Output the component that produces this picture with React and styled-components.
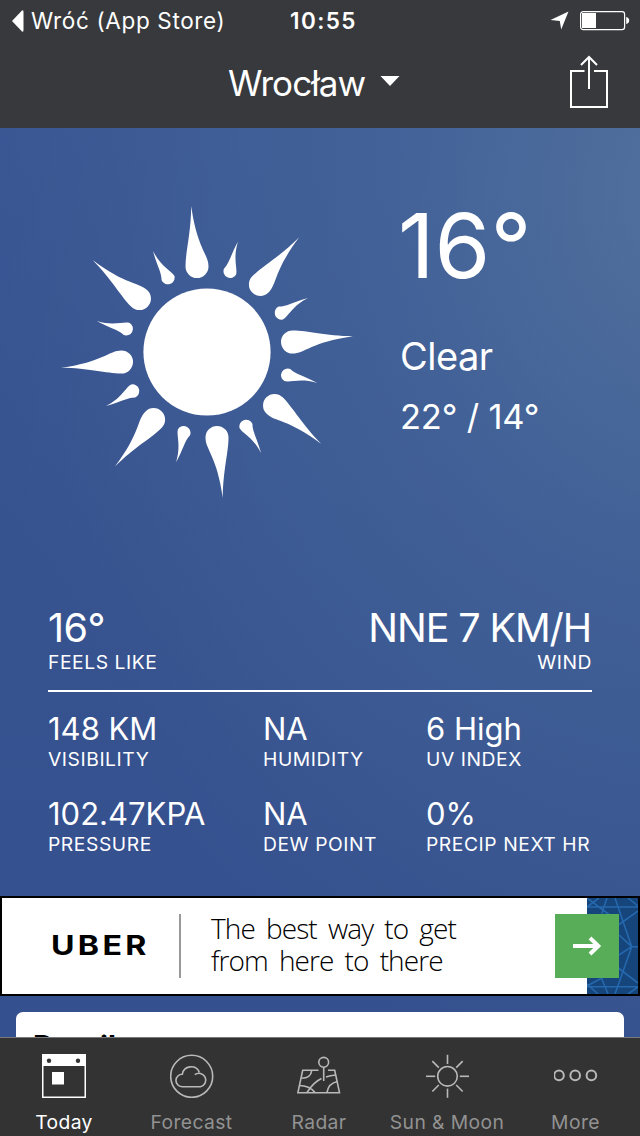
import styled, { createGlobalStyle } from "styled-components";

const stats = [
  { value: "148 KM", label: "VISIBILITY" },
  { value: "NA", label: "HUMIDITY" },
  { value: "6 High", label: "UV INDEX" },
  { value: "102.47KPA", label: "PRESSURE" },
  { value: "NA", label: "DEW POINT" },
  { value: "0%", label: "PRECIP NEXT HR" },
];

const angles = [0, 45, 90, 135, 180, 225, 270, 315];

function SunDrawing() {
  return (
    <svg width="300" height="300" viewBox="-150 -150 300 300" fill="#fff">
      <circle r="63.6" />
      {angles.map((angle, i) => (
        <g key={angle} transform={`rotate(${angle})`}>
          <path d="M-15.8-146C-16-118-21.5-101-21.5-85.5A11.5 11.5 0 0 0 1.5-85.5C1.5-98-10-104-15.8-146Z" />
          {/* every other small ray leans a little */}
          <path
            transform={i % 2 ? "rotate(-1.2)" : undefined}
            d="M-54-101C-50-86-45.4-80-45.4-71.8A6.8 6.8 0 0 0-32.5-75.9C-36-82-46-85-54-101Z"
          />
        </g>
      ))}
    </svg>
  );
}

function ShareIcon() {
  return (
    <svg width="40" height="54" viewBox="0 0 40 54" fill="none" stroke="#fff" strokeWidth="2">
      <path d="M15.5 16H2v36h36V16H25M20 34V2M12 10l8-8 8 8" />
    </svg>
  );
}

function TodayIcon() {
  return (
    <svg width="44" height="44" viewBox="0 0 44 44">
      <path d="M.75.75h42.5v42.5H.75z" fill="none" stroke="#fff" strokeWidth="1.5" />
      <path d="M0 0h44v12H0zM10 18h12v12.5H10z" fill="#fff" />
      <circle cx="7" cy="6.8" r="2.2" fill="#333" />
      <circle cx="36" cy="6.8" r="2.2" fill="#333" />
    </svg>
  );
}

function LineIcon({ children }) {
  return (
    <svg width="44" height="44" viewBox="0 0 44 44" fill="none" stroke="#b9b9b9" strokeWidth="1.6">
      {children}
    </svg>
  );
}

function ForecastIcon() {
  return (
    <LineIcon>
      <circle cx="21.7" cy="22.3" r="21" />
      <path d="M12 32.7A6.2 6.2 0 0 1 12.3 20.3A8.9 8.9 0 0 1 29.3 18.3M24.8 20.7A6.8 6.8 0 1 1 30.5 32.7H12" />
    </LineIcon>
  );
}

function RadarIcon() {
  return (
    <LineIcon>
      <path d="M21.5 16.3H5.7L.9 38.7h41.6L37.7 16.3H31" />
      <circle cx="26.7" cy="8.3" r="4.9" />
      <path d="M26.7 13.3V27M14.7 16.5C14.2 21.5 10 24.2 4.5 24.3M2 31.5C9 31.5 14.5 34 18 38.5M10 38.5C14 32 19 27 24.5 24.5M29 23C32 21.8 35 21.2 38.8 21M30 38.5C31 32.5 35 28.5 40.5 27.5" />
    </LineIcon>
  );
}

function SunMoonIcon() {
  return (
    <LineIcon>
      <circle cx="22.5" cy="22.3" r="9.8" />
      {angles.map((angle) => (
        <path key={angle} d="M22.5.8v9.2" transform={`rotate(${angle} 22.5 22.3)`} />
      ))}
    </LineIcon>
  );
}

function MoreIcon() {
  return (
    <LineIcon>
      <g strokeWidth="2">
        <circle cx="5" cy="21.4" r="4.8" />
        <circle cx="21.2" cy="21.4" r="4.8" />
        <circle cx="37.4" cy="21.4" r="4.8" />
      </g>
    </LineIcon>
  );
}

const tabs = [
  { label: "Today", icon: <TodayIcon />, active: true },
  { label: "Forecast", icon: <ForecastIcon /> },
  { label: "Radar", icon: <RadarIcon /> },
  { label: "Sun & Moon", icon: <SunMoonIcon /> },
  { label: "More", icon: <MoreIcon /> },
];

function App() {
  return (
    <Screen>
      <GlobalStyle />
      <Header>
        <StatusBar>
          <Back>
            <svg width="12" height="22" viewBox="0 0 12 22" fill="#fff">
              <path d="M0 11L10 .6Q11.5-.3 11.5 2v18q0 2.3-1.5 1.4z" />
            </svg>
            <span>Wróć (App Store)</span>
          </Back>
          <Clock>10:55</Clock>
          <Indicators>
            <svg width="19" height="19" viewBox="0 0 19 19" fill="#fff">
              <path d="M.5 9L18.5.5 11.2 18.5 9.8 10z" />
            </svg>
            <svg width="50" height="20" viewBox="0 0 50 20">
              <rect x=".6" y=".6" width="44" height="18" rx="2.6" fill="none" stroke="#fff" strokeWidth="1.2" />
              <path d="M2 2h14v15H2zM46.2 6q3 .6 3 3.5t-3 3.5z" fill="#fff" />
            </svg>
          </Indicators>
        </StatusBar>
        <NavBar>
          <City>
            <span>Wrocław</span>
            <svg width="20" height="11" viewBox="0 0 20 11" fill="#fff">
              <path d="M.5 0h19L10 10z" />
            </svg>
          </City>
          <ShareIcon />
        </NavBar>
      </Header>

      <Content>
        <Hero>
          <SunDrawing />
          <Conditions>
            <Temperature>16°</Temperature>
            <Summary>Clear</Summary>
            <Range>22° / 14°</Range>
          </Conditions>
        </Hero>

        <MainStats>
          <div>
            <BigValue>16°</BigValue>
            <Label>FEELS LIKE</Label>
          </div>
          <RightStat>
            <BigValue>NNE 7 KM/H</BigValue>
            <Label>WIND</Label>
          </RightStat>
        </MainStats>

        <StatGrid>
          {stats.map((stat) => (
            <div key={stat.label}>
              <Value>{stat.value}</Value>
              <Label>{stat.label}</Label>
            </div>
          ))}
        </StatGrid>

        <Ad>
          <AdLogo>
            <span>UBER</span>
          </AdLogo>
          <AdText>
            <div>The best way to get</div>
            <div>from here to there</div>
          </AdText>
          <AdPattern>
            <svg width="51" height="96" viewBox="0 0 51 96" fill="none" stroke="#2668ad" strokeWidth="1.6">
              <path d="M0 9h51M0 88.7h51M44.7 48.7H51M28 0L44.7 48.7 28 96M20 0L14 18M14 79L21 96M30 28L51 13M30 69L51 85M44.7 48.7L32 37M44.7 48.7L32 57M0 9L12 0M0 0L24 18M0 88L24 75M0 86L11 96M41 0L51 8M41 96L51 89" />
            </svg>
          </AdPattern>
          <AdButton>
            <svg width="30" height="20" viewBox="0 0 30 20" fill="none" stroke="#fff" strokeWidth="4">
              <path d="M1 10h25M18 2l8.3 8-8.3 8" />
            </svg>
          </AdButton>
        </Ad>

        <Card>Details</Card>
      </Content>

      <TabBar>
        {tabs.map((tab) => (
          <Tab key={tab.label} $active={tab.active}>
            {tab.icon}
            <TabLabel>{tab.label}</TabLabel>
          </Tab>
        ))}
      </TabBar>
    </Screen>
  );
}

const GlobalStyle = createGlobalStyle`
  * {
    box-sizing: border-box;
  }

  body {
    margin: 0;
  }

  svg {
    display: block;
    flex: none;
  }
`;

const Screen = styled.div`
  width: 640px;
  height: 1136px;
  display: flex;
  flex-direction: column;
  overflow: hidden;
  color: #fff;
  font-family: Inter, "Liberation Sans", sans-serif;
  white-space: nowrap;
  background:
    radial-gradient(ellipse 740px 900px at 700px 190px, rgba(88, 120, 160, 0.8), rgba(80, 115, 160, 0.45) 40%, rgba(70, 100, 155, 0) 100%),
    linear-gradient(#3a5694, #36528f 50%, #35508e);
`;

const Header = styled.header`
  height: 128px;
  flex: none;
  background: #37393d;
`;

const StatusBar = styled.div`
  height: 40px;
  display: grid;
  grid-template-columns: 290px 1fr auto;
  align-items: center;
  padding: 0 10px 0 0;
  line-height: 40px;
`;

const Back = styled.div`
  display: flex;
  align-items: center;
  gap: 7px;
  padding-left: 12px;
  font-size: 22.5px;
  letter-spacing: 0.65px;
`;

const Clock = styled.div`
  padding-top: 1px;
  font-size: 22.5px;
  font-weight: 600;
  letter-spacing: 1.4px;
`;

const Indicators = styled.div`
  display: flex;
  align-items: center;
  gap: 11px;
`;

const NavBar = styled.nav`
  height: 88px;
  display: flex;
  align-items: flex-start;
  justify-content: space-between;
  padding: 15px 31px 0 228px;
`;

const City = styled.div`
  display: flex;
  align-items: center;
  gap: 15px;
  font-size: 35px;
  line-height: 56px;
  letter-spacing: -0.9px;

  svg {
    margin-top: -3px;
  }
`;

const Content = styled.main`
  flex: 1;
  min-height: 0;
  overflow: hidden;
`;

const Hero = styled.section`
  display: flex;
  gap: 43px;
  height: 477px;
  padding: 74px 0 0 57px;
`;

const Conditions = styled.div`
  margin-top: -1px;
`;

const Temperature = styled.div`
  margin-left: -2px;
  font-size: 90px;
  line-height: 90px;
  letter-spacing: 0;
`;

const Summary = styled.div`
  margin-top: 42px;
  font-size: 38px;
  line-height: 46px;
  letter-spacing: -0.5px;
`;

const Range = styled.div`
  margin-top: 17px;
  font-size: 34.5px;
  line-height: 42px;
  letter-spacing: -0.2px;
`;

const MainStats = styled.section`
  display: flex;
  justify-content: space-between;
  margin: 0 48px;
  padding-bottom: 16px;
  border-bottom: 2px solid #fff;
`;

const BigValue = styled.div`
  padding-top: 2px;
  font-size: 39.5px;
  line-height: 43px;
  letter-spacing: -0.5px;
`;

const RightStat = styled.div`
  text-align: right;

  ${BigValue} {
    padding-right: 1px;
    letter-spacing: -1.1px;
  }
`;

const Value = styled.div`
  font-size: 31px;
  line-height: 36px;
`;

const Label = styled.div`
  font-size: 19.3px;
  line-height: 24px;
  letter-spacing: 0.55px;
`;

const StatGrid = styled.section`
  display: grid;
  grid-template-columns: 215px 163px 1fr;
  row-gap: 25px;
  margin: 19px 0 40px 48px;
`;

const Ad = styled.section`
  display: grid;
  grid-template-columns: 179px 406px 51px;
  height: 100px;
  border: 2px solid #000;
  background: #fff;
  color: #000;
  position: relative;
`;

const AdLogo = styled.div`
  margin: 16px 0;
  padding-left: 49px;
  border-right: 2px solid #999;
  font-size: 27px;
  font-weight: 700;
  line-height: 63px;
  letter-spacing: 2.8px;

  /* the wordmark is set extra wide */
  span {
    display: inline-block;
    transform: scaleX(1.19);
    transform-origin: left;
  }
`;

const AdText = styled.div`
  padding: 14px 0 0 30px;
  font-family: "Open Sans", "Noto Sans", sans-serif;
  font-size: 28px;
  font-weight: 300;
  line-height: 32px;
  letter-spacing: -0.9px;
  word-spacing: 4.7px;
`;

const AdPattern = styled.div`
  background: #15457a;
`;

/* overlaps the edge of the blue pattern */
const AdButton = styled.div`
  position: absolute;
  top: 16px;
  right: 19px;
  width: 64px;
  height: 64px;
  display: flex;
  align-items: center;
  justify-content: center;
  background: #58ae58;
`;

const Card = styled.section`
  height: 200px;
  margin: 16px 16px 0;
  padding: 16px 17px;
  border-radius: 7px;
  background: #fff;
  color: #000;
  font-size: 29.5px;
  font-weight: 700;
  line-height: 36px;
`;

const TabBar = styled.footer`
  flex: none;
  height: 99px;
  display: grid;
  grid-template-columns: 128px 127px 128px 128px 129px;
  border-top: 1px solid #77797c;
  background: #333;
`;

const Tab = styled.div`
  display: flex;
  flex-direction: column;
  align-items: center;
  padding-top: 16px;
  color: ${(props) => (props.$active ? "#fff" : "#929292")};
`;

const TabLabel = styled.div`
  margin-top: 12px;
  font-size: 19.3px;
  line-height: 24px;
  letter-spacing: 0.4px;
`;

export default App;
